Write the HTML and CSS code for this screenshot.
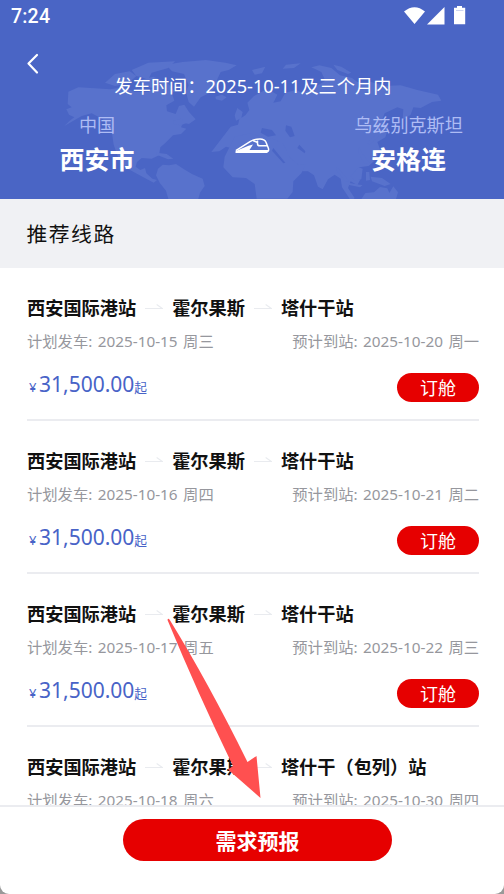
FILE: index.html
```html
<!DOCTYPE html>
<html lang="zh-CN">
<head>
<meta charset="utf-8">
<title>推荐线路</title>
<link rel="stylesheet" href="styles.css">
</head>
<body>
<div class="screen">
  <header class="hero">
    <svg class="map" viewBox="0 0 1512 597" aria-hidden="true">
      <path d="M205 275l30-13 50 3 45 3 40-6 35 14 40 0 32-26 20 6-8 24 28 4 6 18-24 14 2 18 26 8 10-24 16-4 14 22 20 22-20 14-18-4-6 14 16 4-16 16-24 4-24 24-14 12-4 24-22 10-30-2-14 12-4 14 14 10 14-6 4 16 18 16 14 4-10 8-42-22-40-22-24-30-14-40-6-42-26-34-34-18-30 8-52 30 16-16 14-10-16-8-8-16 16-6-12-10z"/>
      <path d="M315 248l30-26 44-8 20 14-24 22-40 8zM395 210l50-22 80-4-20 20-50 14-10 20-36-10zM420 240l40-10 44 20 20 24-20 14-28-22-40-6z"/>
      <path d="M498 194l50-8 70-6 58 8 34 8-24 14-24 6-10 22-4 22-18 18-28 14-20 28-16-14-8-30 8-20-14-34-36-8zM646 290l20-6 14 8-14 10-18-4zM520 362l22-6 16 14-16 6-20-4z"/>
      <path d="M470 458l30 4 20 14-16 2-34-14zM474 506l14-12 20 2 20-4 24 16 24 14 32 14 6 22-14 20-6 22H506l-8-28-18-22-12-24z"/>
      <path d="M692 380l22-6 4-16 18-12 12-16-6-22 20-20 26-14 20-4 24 14-12 24 22-4 14-26 32-8 18 8 30-12 40-24-12-26-30-14 24-6 36 8 26 22 36 8 16 12 42 0 40 12 48-2 50 14 62 14 10 18-28 4-34 18-22-2-8 22-24 16 2-32-18-6-38 18-8 22 20 20-10 30-24 14 8 22-12 30-22 20-28 4-14 14 16 24-8 16-20-12-8 20 20 30-10 10-28-42-4-26-18-12-20 14-16 30-14-8-12-34-18-12-36 0-12 22-26 20-22 10-18-30-20-40-16-2-8-14-30-2-24-10-10-22-24-6-20 14-24 2zM704 346l8-22 16 12-4 18-16 8z"/>
      <path d="M704 410l46-10 34 10 40 8 26 14 18 38 28 26 22-4-14 28-24 24-2 32-16 20H770l-6-44-26-18-40-2-28-30 4-32zM844 576l20-14 4 14-14 20zM1008 500l26 26 16 22-14-4-26-32zM1052 528l24-26 12 4-4 32-20 4zM1044 548l44 8-8 6-36-8zM1098 516l10 0 2 24-12 2zM1112 530l34 4 26 18-18 6-38-14zM1084 597l12-18 26-2 18-16 22 4 6 14 12-20 14 18-6 20zM1076 440l12 22 20 26-14 4-18-32zM1130 388l16 10-20 20-18 16-8-6 24-20zM858 194l44-4-20 14-34 2zM756 210l40-10-10 20-22 4zM1000 194l24 6 30 18-10 4-32-12z"/>
      <path class="sea" d="M786 384l30 6 12 16-24 4-22-12zM858 376l16 4 10 28-14 4-14-20zM820 444l36 44-6 2-34-38zM898 434l18 20-2 6-22-16z"/>
    </svg>
    <div class="status">
      <span class="clock">7:24</span>
      <svg class="status-icons" viewBox="0 0 64 20">
        <path d="M0 5.500Q10.500-3 21 5.500L10.500 18zM40.500 1v17.500H23z"/>
        <path d="M53 0h5v1.800h3.200v16.400H50V1.800h3z"/>
        <path class="charge" d="M52 4.500h7.500"/>
      </svg>
    </div>
    <svg class="back" viewBox="0 0 14 22"><path d="M11 2L2.500 10.500l8.500 9"/></svg>
    <p class="depart">发车时间：2025-10-11及三个月内</p>
    <div class="trip">
      <div class="place from"><span>中国</span><strong>西安市</strong></div>
      <svg class="train" viewBox="0 0 36 18">
        <path class="body" d="M.8 12.600L15 3.600Q19.500.9 25 .9Q29.500.9 31 4.200L33.300 10Q34.600 14.200 30.500 14.200H1"/>
        <path class="fill" d="M5 11.200L13.500 7.800 18 6.500 14.500 12H33.500L32 15H.5v-1.800z"/>
        <path class="body" d="M18 2.500l4 1.800M22.500 2.500v3.200Q22.500 7.800 25 7.800H32"/>
      </svg>
      <div class="place to"><span>乌兹别克斯坦</span><strong>安格连</strong></div>
    </div>
  </header>
  <h1 class="section">推荐线路</h1>
  <main class="routes">
    <article class="route">
      <h2><span>西安国际港站</span><i class="hop"></i><span>霍尔果斯</span><i class="hop"></i><span>塔什干站</span></h2>
      <div class="dates"><span>计划发车: 2025-10-15 周三</span><span>预计到站: 2025-10-20 周一</span></div>
      <div class="buy"><p class="price"><small>¥</small>31,500.00<em>起</em></p><button>订舱</button></div>
    </article>
    <article class="route">
      <h2><span>西安国际港站</span><i class="hop"></i><span>霍尔果斯</span><i class="hop"></i><span>塔什干站</span></h2>
      <div class="dates"><span>计划发车: 2025-10-16 周四</span><span>预计到站: 2025-10-21 周二</span></div>
      <div class="buy"><p class="price"><small>¥</small>31,500.00<em>起</em></p><button>订舱</button></div>
    </article>
    <article class="route">
      <h2><span>西安国际港站</span><i class="hop"></i><span>霍尔果斯</span><i class="hop"></i><span>塔什干站</span></h2>
      <div class="dates"><span>计划发车: 2025-10-17 周五</span><span>预计到站: 2025-10-22 周三</span></div>
      <div class="buy"><p class="price"><small>¥</small>31,500.00<em>起</em></p><button>订舱</button></div>
    </article>
    <article class="route">
      <h2><span>西安国际港站</span><i class="hop"></i><span>霍尔果斯</span><i class="hop"></i><span>塔什干（包列）站</span></h2>
      <div class="dates"><span>计划发车: 2025-10-18 周六</span><span>预计到站: 2025-10-30 周四</span></div>
    </article>
  </main>
  <footer class="bottom"><button>需求预报</button></footer>
  <svg class="pointer" viewBox="0 0 96 182"><path d="M0.500 2Q1 0 2.500 1.500Q41 64 80.500 144L89.500 138L93.500 180L61 151.500L66 148Q31 76 0.500 2z"/></svg>
</div>
</body>
</html>
```
FILE: styles.css
```css
* { box-sizing: border-box; margin: 0; padding: 0; }
html { background: #999; }
body { font-family: "Noto Sans", "Noto Sans CJK SC", sans-serif; color: #111; }
button { border: 0; font-family: inherit; color: #fff; background: #e60000; }
svg { display: block; }

.screen {
  position: relative;
  width: 504px;
  height: 894px;
  display: flex;
  flex-direction: column;
  overflow: hidden;
  background: #fff;
  border-radius: 0 0 9px 9px;
}

.hero {
  position: relative;
  flex: none;
  height: 199px;
  color: #fff;
  background: #4a65c5;
}
.map { position: absolute; left: 0; top: 0; width: 504px; height: 199px; fill: #5872cc; }
.map .sea { fill: #4a65c5; }
.hero > :not(.map) { position: relative; }

.status { display: flex; justify-content: space-between; height: 32px; padding: 6px 36px 0 11px; }
.clock { font: 500 19.500px/22px Roboto, sans-serif; letter-spacing: .2px; }
.status-icons { width: 64px; height: 20px; fill: #fff; }
.charge { stroke: #cdd5f0; }
.back { width: 14px; height: 22px; margin: 21px 0 0 26px; fill: none; stroke: #fff; stroke-width: 2.2; stroke-linecap: round; stroke-linejoin: round; }
.depart { margin: -1px 0 0 114.500px; height: 24px; font-size: 18.200px; line-height: 24px; white-space: nowrap; }
.trip { display: grid; grid-template-columns: 194px 119px 191px; align-items: start; margin-top: 14px; }
.place { display: flex; flex-direction: column; align-items: center; white-space: nowrap; }
.place span { font-size: 18.100px; line-height: 26px; color: #aebcf4; }
.place strong { margin-top: 4px; font-size: 25px; line-height: 34px; }
.train { width: 36px; height: 18px; margin: 26px 0 0 41px; }
.train .body { fill: none; stroke: #fff; stroke-width: 1.500; stroke-linejoin: round; }
.train .fill { fill: #fff; }

.section {
  flex: none;
  height: 69px;
  padding-left: 26.500px;
  font-size: 20.800px;
  font-weight: 400;
  line-height: 70px;
  letter-spacing: 1.500px;
  background: #f0f1f4;
}

.routes { flex: 1; min-height: 0; overflow: hidden; padding: 0 25px 0 27px; }
.route { height: 153px; padding-top: 26px; border-bottom: 2px solid #ebecf0; }
.route h2 { display: flex; align-items: center; height: 26px; font-size: 18.200px; font-weight: 700; white-space: nowrap; }
.hop { position: relative; width: 18px; height: 1px; margin: 3px 9px 0; background: #e9ebef; }
.hop::after { content: ""; position: absolute; right: 0; top: -2px; width: 7px; height: 1px; background: #e9ebef; transform: rotate(35deg); }
.dates { display: flex; justify-content: space-between; height: 24px; margin-top: 9px; font-size: 15.300px; line-height: 24px; word-spacing: 1.500px; color: #96979d; white-space: nowrap; }
.buy { display: flex; justify-content: space-between; margin-top: 16px; height: 32px; }
.price { font-size: 21px; line-height: 30px; color: #4863c7; }
.price small { display: inline-block; width: 12px; padding-left: 2px; font-size: 13px; }
.price em { font-size: 12.700px; font-style: normal; }
.buy button { width: 82px; height: 29px; margin-top: 4px; padding-top: 1px; border-radius: 15px; font-size: 18px; line-height: 28px; }

.bottom { flex: none; height: 89px; padding: 12px 0 0 123px; border-top: 2px solid #ebecf0; }
.bottom button { width: 269px; height: 42px; padding-top: 2px; border-radius: 21px; font-size: 21px; font-weight: 700; line-height: 40px; }

.pointer { position: absolute; left: 167px; top: 618px; width: 96px; height: 182px; fill: #ff5050; }
```
